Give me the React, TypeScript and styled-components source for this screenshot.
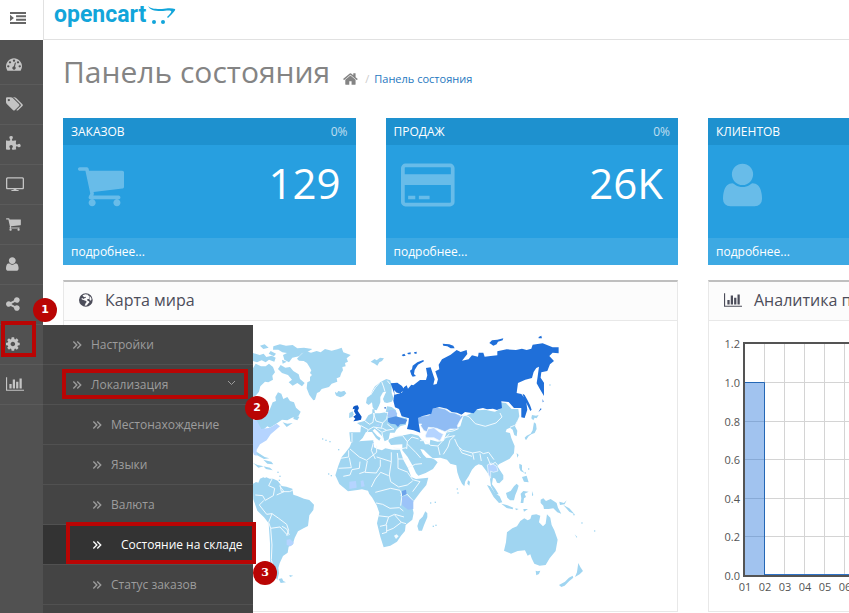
import React from 'react';
import styled, { createGlobalStyle, css } from 'styled-components';

const Global = createGlobalStyle`
  * { box-sizing: border-box; }
  body {
    margin: 0;
    background: #fff;
    color: #666;
    font-family: "Open Sans", sans-serif;
    font-size: 12px;
    line-height: 20px;
    overflow: hidden;
  }
  ul, h1, h2, p { margin: 0; padding: 0; }
  ul { list-style: none; }
  a { text-decoration: none; color: inherit; }
`;

/* ---------- icons ---------- */

const glyphs = {
  dashboard: { box: '0 0 1792 1792', ratio: 1792, d: 'M384 1152q0-53-37.500-90.500t-90.500-37.500-90.500 37.500-37.500 90.500 37.500 90.500 90.500 37.500 90.500-37.500 37.500-90.500zm192-448q0-53-37.500-90.500t-90.500-37.500-90.500 37.500-37.500 90.500 37.500 90.500 90.500 37.500 90.500-37.500 37.500-90.500zm428 481l101-382q6-26-7.500-48.500t-38.500-29.500-48 6.500-30 39.500l-101 382q-60 5-107 43.500t-63 98.500q-20 77 20 146t117 89 146-20 89-117q16-60-6-117t-72-91zm660-33q0-53-37.500-90.500t-90.500-37.500-90.500 37.500-37.500 90.500 37.500 90.500 90.500 37.500 90.500-37.500 37.500-90.500zm-640-640q0-53-37.500-90.500t-90.500-37.500-90.500 37.500-37.500 90.500 37.500 90.500 90.500 37.500 90.500-37.500 37.500-90.500zm448 192q0-53-37.500-90.500t-90.500-37.500-90.500 37.500-37.500 90.500 37.500 90.500 90.500 37.500 90.500-37.500 37.500-90.500zm320 448q0 261-141 483-19 29-54 29h-1402q-35 0-54-29-141-221-141-483 0-182 71-348t191-286 286-191 348-71 348 71 286 191 191 286 71 348z' },
  tags: { box: '128 0 1920 1792', ratio: 1920, d: 'M576 448q0-53-37.500-90.500t-90.500-37.500-90.500 37.500-37.500 90.500 37.500 90.500 90.500 37.500 90.500-37.500 37.500-90.500zm1067 576q0 53-37 90l-491 492q-39 37-91 37-53 0-90-37l-715-716q-38-37-64.500-101t-26.500-117v-416q0-52 38-90t90-38h416q53 0 117 26.500t102 64.500l715 714q37 39 37 91zm384 0q0 53-37 90l-491 492q-39 37-91 37-36 0-59-14t-53-45l470-470q37-37 37-90 0-52-37-91l-715-714q-38-38-102-64.500t-117-26.500h224q53 0 117 26.500t102 64.500l715 714q37 39 37 91z' },
  puzzle: { box: '91 0 1701 1792', ratio: 1701, d: 'M1755 1083q0 81-44.500 135t-123.500 54q-41 0-77.500-17.500t-59-38-56.500-38-71-17.500q-110 0-110 124 0 39 16 115t15 115v5q-22 0-33 1-34 3-97.500 11.500t-115.500 13.500-98 5q-61 0-103-26.500t-42-83.500q0-37 17.500-71t38-56.500 38-59 17.500-77.500q0-79-54-123.500t-135-44.500q-84 0-143 45.500t-59 127.500q0 43 15 83t33.500 64.500 33.500 53 15 50.500q0 45-46 89-37 35-117 35-95 0-245-24-9-2-27.500-4t-27.500-4l-13-2q-1 0-3-1-2 0-2-1v-1024q2 1 17.500 3.500t34 5 21.500 3.500q150 24 245 24 80 0 117-35 46-44 46-89 0-22-15-50.500t-33.500-53-33.500-64.500-15-83q0-82 59-127.500t144-45.500q80 0 134 44.500t54 123.500q0 41-17.500 77.500t-38 59-38 56.500-17.500 71q0 57 42 83.500t103 26.500q64 0 180-15t163-17v2q-1 2-3.500 17.500t-5 34-3.500 21.500q-24 150-24 245 0 80 35 117 44 46 89 46 22 0 50.500-15t53-33.500 64.500-33.500 83-15q82 0 127.500 59t45.500 143z' },
  desktop: { box: '0 0 2048 1792', ratio: 2048, d: 'M160 128h1728q66 0 113 47t47 113v1056q0 66-47 113t-113 47h-704v80h230q34 0 34 50t-34 50h-780q-34 0-34-50t34-50h230v-80h-704q-66 0-113-47t-47-113v-1056q0-66 47-113t113-47zm32 150q-44 0-44 44v986q0 44 44 44h1664q44 0 44-44v-986q0-44-44-44z' },
  cart: { box: '64 0 1664 1792', ratio: 1664, d: 'M704 1536q0 52-38 90t-90 38-90-38-38-90 38-90 90-38 90 38 38 90zm896 0q0 52-38 90t-90 38-90-38-38-90 38-90 90-38 90 38 38 90zm128-1088v512q0 24-16.500 42.500t-40.500 21.500l-1044 122q13 60 13 70 0 16-24 64h920q26 0 45 19t19 45-19 45-45 19h-1024q-26 0-45-19t-19-45q0-11 8-31.500t16-36 21.500-40 15.500-29.500l-177-823h-204q-26 0-45-19t-19-45 19-45 45-19h256q16 0 28.500 6.500t19.500 15.500 13 24.500 8 26 5.500 29.500 4.500 26h1201q26 0 45 19t19 45z' },
  user: { box: '0 0 1408 1792', ratio: 1408, d: 'M1408 1405q0 120-73 189.500t-194 69.500h-874q-121 0-194-69.500t-73-189.500q0-53 3.500-103.500t14-109 26.500-108.500 43-97.500 62-81 85.500-53.500 111.500-20q9 0 42 21.500t74.500 48 108 48 133.500 21.500 133.500-21.500 108-48 74.500-48 42-21.500q61 0 111.500 20t85.500 53.500 62 81 43 97.500 26.500 108.500 14 109 3.500 103.500zM1088 512q0 159-112.500 271.500t-271.500 112.500-271.500-112.500-112.500-271.500 112.500-271.500 271.500-112.500 271.500 112.500 112.500 271.500z' },
  share: { box: '128 0 1536 1792', ratio: 1536, d: 'M1344 1024q133 0 226.500 93.500t93.500 226.500-93.500 226.500-226.500 93.500-226.500-93.500-93.500-226.500q0-12 2-34l-360-180q-92 86-218 86-133 0-226.500-93.500t-93.500-226.500 93.500-226.500 226.500-93.500q126 0 218 86l360-180q-2-22-2-34 0-133 93.500-226.500t226.500-93.500 226.500 93.500 93.500 226.500-93.500 226.500-226.500 93.500q-126 0-218-86l-360 180q2 22 2 34t-2 34l360 180q92-86 218-86z' },
  cog: { box: '128 0 1536 1792', ratio: 1536, d: 'M1152 896q0-106-75-181t-181-75-181 75-75 181 75 181 181 75 181-75 75-181zm512-109v222q0 12-8 23t-20 13l-185 28q-19 54-39 91 35 50 107 138 10 12 10 25t-9 23q-27 37-99 108t-94 71q-12 0-26-9l-138-108q-44 23-91 38-16 136-29 186-7 28-36 28h-222q-14 0-24.500-8.500t-11.500-21.500l-28-184q-49-16-90-37l-141 107q-10 9-25 9-14 0-25-11-126-114-165-168-7-10-7-23 0-12 8-23 15-21 51-66.500t54-70.500q-27-50-41-99l-183-27q-13-2-21-12.500t-8-23.500v-222q0-12 8-23t19-13l186-28q14-46 39-92-40-57-107-138-10-12-10-24 0-10 9-23 26-36 98.500-107.500t94.500-71.500q13 0 26 10l138 107q44-23 91-38 16-136 29-186 7-28 36-28h222q14 0 24.500 8.500t11.500 21.500l28 184q49 16 90 37l142-107q9-9 24-9 13 0 25 10 129 119 165 170 7 8 7 22 0 12-8 23-15 21-51 66.500t-54 70.500q26 50 41 98l183 28q13 2 21 12.500t8 23.500z' },
  chart: { box: '0 0 2048 1792', ratio: 2048, d: 'M640 896v512h-256v-512h256zm384-512v1024h-256v-1024h256zm1024 1152v128h-2048v-1536h128v1408h1920zm-640-896v768h-256v-768h256zm384-384v1152h-256v-1152h256z' },
  home: { box: '64 0 1664 1792', ratio: 1664, d: 'M1472 992v480q0 26-19 45t-45 19h-384v-384h-256v384h-384q-26 0-45-19t-19-45v-480q0-1 .5-3t.5-3l575-474 575 474q1 2 1 6zm223-69l-62 74q-8 9-21 11h-3q-13 0-21-7l-692-577-692 577q-12 8-24 7-13-2-21-11l-62-74q-8-10-7-23.500t11-21.500l719-599q32-26 76-26t76 26l244 204v-195q0-14 9-23t23-9h192q14 0 23 9t9 23v408l219 182q10 8 11 21.500t-7 23.500z' },
  card: { box: '0 0 1920 1792', ratio: 1920, d: 'M160 128h1600q66 0 113 47t47 113v1216q0 66-47 113t-113 47h-1600q-66 0-113-47t-47-113v-1216q0-66 47-113t113-47zm0 128q-26 0-26 26v230h1652v-230q0-26-26-26zm-26 640v608q0 26 26 26h1600q26 0 26-26v-608zM256 1280h256v128h-256zM640 1280h384v128h-384z' },
  indent: { box: '0 0 1792 1792', ratio: 1792, d: 'M0 224h1792v224H0zM680 600h1112v224H680zM680 970h1112v224H680zM0 1344h1792v224H0zM0 540l440 356-440 356z' },
  angles: { box: '0 0 1024 1024', ratio: 1024, d: 'M90 200l95-90 410 402-410 402-95-90 310-312zM490 200l95-90 410 402-410 402-95-90 310-312z' },
  globe: { box: '0 0 1536 1792', ratio: 1536, d: 'M768 128a768 768 0 1 1 0 1536a768 768 0 1 1 0-1536zM700 250l-130 60-110 30-60 110 110 60 60 80 130-60 70 70-30 80-130 20-90 80-110-90-130 20 40 120 170 60 150 60 160 60 60 120-110 110-60 160-70 90 130 40 140-60 110-150 160-140-20-120-150-90-110-70 60-80 120-50 150-30-110-140 90-60-60-110-120-30 10-100zM1240 500l-70 110 60 130-60 100 80 110 100 10 50-160-30-170z' },
} as const;

type GlyphName = keyof typeof glyphs;

const Svg = styled.svg`
  display: block;
  flex: none;
  fill: currentColor;
`;

function Icon({ name, size }: { name: GlyphName; size: number }) {
  const g = glyphs[name];
  return (
    <Svg
      viewBox={g.box}
      width={name === 'angles' ? size : Math.round((g.ratio / 1792) * size)}
      height={size}
      preserveAspectRatio="xMinYMid meet"
      aria-hidden="true"
    >
      <path fillRule="evenodd" d={g.d} />
    </Svg>
  );
}

/* ---------- frame ---------- */

const Shell = styled.div`
  display: grid;
  grid-template-columns: 43px minmax(0, 1fr);
  grid-template-rows: 40px auto;
  min-height: 100vh;
`;

const Toggle = styled.button`
  display: flex;
  align-items: center;
  padding: 0 0 4px 10px;
  border: 0;
  background: #fff;
  color: #666;
`;

const TopBar = styled.header`
  display: flex;
  align-items: flex-start;
  padding: 0 10px;
  background: #fff;
  border-left: 1px solid #e1e1e1;
  border-bottom: 1px solid #e1e1e1;
`;

const Logo = styled.a`
  display: flex;
  align-items: flex-start;
  gap: 1px;
  color: #12a5da;
  font: 700 23px/30px Roboto, sans-serif;
`;

const LogoCart = styled.svg`
  margin-top: 5px;
`;

const SideNav = styled.nav`
  position: relative;
  z-index: 2;
  background: #515151;
  padding-top: 5px;
  min-width: 0;
`;

const SideItem = styled.li`
  position: relative;
  border-bottom: 1px solid #5b5b5b;
`;

const SideLink = styled.a`
  display: flex;
  align-items: center;
  height: 39px;
  padding: 0 0 2px 6px;
  color: #c4c4c4;
`;

const SubMenu = styled.ul`
  position: absolute;
  top: 0;
  left: 43px;
  width: 210px;
  padding-bottom: 8px;
  background: #444;
`;

const SubItem = styled.li<{ $active?: boolean }>`
  position: relative;
  border-bottom: 1px solid #515151;
  background: ${(p) => (p.$active ? '#333' : 'transparent')};
`;

const SubLink = styled.a<{ $depth: number; $active?: boolean }>`
  display: flex;
  align-items: center;
  gap: ${(p) => (p.$active ? 19 : 9)}px;
  height: 39px;
  padding: 0 17px 0 ${(p) => 9 + 20 * p.$depth}px;
  color: ${(p) => (p.$active ? '#fff' : '#9d9d9d')};
  white-space: nowrap;
`;

const Chevron = styled.svg`
  margin: 0 0 3px auto;
  fill: none;
  stroke: #9d9d9d;
`;

/* ---------- numbered callouts ---------- */

const spots = {
  one: css`top: -4px; left: 1px; width: 35px; height: 36px;`,
  two: css`top: 4px; left: 19px; width: 186px; height: 30px;`,
  three: css`top: -3px; left: 23px; width: 190px; height: 42px;`,
};

const Outline = styled.span<{ $at: keyof typeof spots }>`
  position: absolute;
  z-index: 2;
  border: 4px solid #b90504;
  pointer-events: none;
  ${(p) => spots[p.$at]}
`;

const badgeSpots = {
  one: css`top: -27px; left: 33px;`,
  two: css`top: 31px; left: 202px;`,
  three: css`top: 36px; left: 210px;`,
};

const Badge = styled.span<{ $at: keyof typeof spots }>`
  position: absolute;
  z-index: 3;
  width: 24px;
  height: 24px;
  border-radius: 50%;
  background: #b90504;
  color: #fff;
  text-align: center;
  font: 700 11px/24px ${(p) => (p.$at === 'three' ? '"DejaVu Serif", serif' : '"DejaVu Sans", sans-serif')};
  ${(p) => badgeSpots[p.$at]}
`;

/* ---------- content ---------- */

const Content = styled.main`
  min-width: 0;
  overflow: hidden;
  padding: 12px 20px 0;
`;

const Heading = styled.div`
  display: flex;
  align-items: flex-start;
  height: 66px;
`;

const Title = styled.h1`
  font-size: 30px;
  line-height: 40px;
  font-weight: 400;
  color: #848484;
  white-space: nowrap;
`;

const Crumbs = styled.ol`
  display: flex;
  align-items: center;
  gap: 7px;
  margin: 0;
  padding: 17px 0 0 13px;
  list-style: none;
  font-size: 11px;
  color: #848484;
`;

const Crumb = styled.li`
  display: flex;
  gap: 5px;
  align-items: center;
`;

const Slash = styled.span`
  color: #ccc;
`;

const CrumbLink = styled.a`
  color: #1e78c0;
`;

const HomeLink = styled.a`
  display: block;
`;

const Grid = styled.div`
  display: grid;
  grid-template-columns: repeat(4, minmax(0, 1fr));
  gap: 15px 30px;
  min-width: 1260px;
`;

const Tile = styled.section`
  background: #279fe0;
  color: #fff;
`;

const TileHead = styled.h2`
  display: flex;
  justify-content: space-between;
  padding: 4px 8px 3px;
  background: #1e91cf;
  font-size: 12px;
  line-height: 20px;
  font-weight: 400;
`;

const Percent = styled.span`
  opacity: 0.7;
`;

const TileBody = styled.div`
  display: flex;
  justify-content: space-between;
  height: 93px;
  padding: 15px;
  font-size: 42px;
  line-height: 46px;
`;

const TileIcon = styled.span`
  opacity: 0.3;
`;

const TileFoot = styled.a`
  display: block;
  padding: 4px 8px 3px;
  background: #3da9e3;
`;

const Panel = styled.section`
  grid-column: span 2;
  border: 1px solid #e8e8e8;
  border-top: 2px solid #bfbfbf;
`;

const PanelHead = styled.h2`
  display: flex;
  align-items: center;
  gap: 12px;
  height: 39px;
  padding: 0 15px 2px;
  border-bottom: 1px solid #e8e8e8;
  background: #fcfcfc;
  font-size: 16px;
  font-weight: 400;
  color: #4c4d5a;
`;

const Drawing = styled.svg`
  display: block;
  width: 100%;
  height: 290px;
`;

/* ---------- world map ---------- */

const land = '#a0d5f1';
const pale = '#b5d4ff';
const seam = '#f2fafe';

const north = [
  'M145 85l20-20 18 6 17-5 12 4 13-10 20 5 17-4 13-5 5 14 22 8-12 10 4 10-9 4 2 10-10 2 2 10-5 8-4 12-10 4 2 10-17 6-8 10-22 6-6 8-8 4-6 20-5 2-12-16-8-20 2-18 8-4 0-12 6-6-6-6 4-8-7-12-6-10-10-6-14-1-6-6z',
  'M255 188l6 4 4-6 8 2 10-3 6 8-8 8-10 4-12-5-3-5z',
  'M362 98l12-8 6 4 10-8 12 2-6 8-8 4-6 10-8-6z',
  'M9 72l20 6 12-4 8 10 16-4 12 6-4 12-16-6-10 8-12-6-14 6-12-4zM70 52l20-6 18 4 20-2 14 10 20-2 25 4-16 10-14 2-10 10-20 4-10 14-14-8-4-14 12-6-14-2-12-8-16 0zM30 50l14-4 12 10-16 4zM62 66l16 8-6 8-16-8zM96 92l14 6-12 6z',
  'M9 118l8-14 16 8 14 0 10-8 12 10 6 16-8 10 2 12-14 8-10-2-14 14-4 16-10 12-8 2zM92 108l14 8 14-2 10 12 16 10 4 14 14 12-8 10-14-10-14 8-12-10 10-8-12-14-18-6-12-12z',
  'M60 240l8-20 10-4-2-12 8-14 10 4 6 16 12-6 8 12 12 4 6 16 14 12-6 12-20 6-14 8-16-2-14 10-22 14-8-4-12 10-20 4-12-24 18-14 22-8zM134 256l14 8-6 10-12-4zM98 280l14 4 16-2-18 12z',
  'M348 222l3-16 11-8 6-14 7-12 18-14 16-8 12 4 4 12 0 26 6 16-6 10-14 4-8-2-4-10 6-14 4-8-10 2-8 14 0 16-4 10-7 14-7-2-5-8-2-14-10 8z',
  'M298 310h33l2-20-12-8 14-4 10-3 10-16 12-6 0-12 6 0 2 12 14 0 18-3 4-18 14 2 13 10 4 20 28 3-2 20-16 4-12 10-6 10-14 0-4 20-12 6-6-14-16-16-8-8-6 6 14 16 10 6-4 8-10-8-12-18-18 0-10 18-13 13-24-2z',
  'M298 252l10-5 3 9-4 8-10 3z',
  'M12 366l10 4 22 14 14 4-16 2-22-12zM40 392l24 6 6 8-18-2z',
];

const asia =
  'M190 262l20-7 15-15 12 4 18-2 18 4 12 2 15-8-2-20 20 2 17 18 20 0 3 22-8 18-5 12 7 13-2 17-7-4-5-16-8-6-10 5-3 8 13 3 4 15 10 24-2 22-13 16-19 10-12 6-6 6 9 14 9 14 0 12-12 12-7-2-5-12-7-3-3 20 10 13 10 17-10 0-13-25-4-30-10-15-13-17-10-3-10 5-10 11-10 20-10 15-3 15-7-8-8-16-6-18-3-21-18-5-10-12-20-6-22 2-8-6-8-8-12-12-10-2 8 16 10 10 16 2 10 4 8 8-14 20-22 12-22 8-7-8-10-22-15-26-16-20 0-18-34 2-8-12 4-6 24-8 22-4 18-4 24 6 10 8 8 18 14 0 2-14 22 6 18-2 10-30 18-4 22-10z';

const russia =
  'M-28 163l20-2 14 10 6 10-10 12-12-2-8-8 2 14 22-6 6-16 8-6 4 10 10-12 6 2 20-16 18 0 4-14-4-22 14-2 4 12 8 24-4 16 10-2 4-14-8-24 12-6-2-14 10-16 26-14 18-14 12 6 18-6 2 12-16 20 20-4 10-12 18 4 2-12 14 0 4 12 18-2 20-2 0-12 28-6 28 2 18-4 14 4 14-4 4-12 30-4 30 12 18 0 0 18-18-2-10 10 14 15-12 10-8 20-18 4-2 16 10 15 0 40-12-20-10-18 3-20 4-30-8 4-8 12-5 18-20 5-22 10-4 30 14 3 14 17 4 30-8 25-10-2 0-28-22 0-16-18-22-2 2 20-15 6-12-4-18 2-12-4-18 4-10 12-26-4-10 8-14-6-16-2-14-10-23-5-20 5-4 15-26 7-14 6 2 16 5 28-20-7-20-4 4-16 2-16-22-6-8-22-12-5-5-20 3-20z';

const isles = [
  'M5 78l8-4 4 6-8 2zM22 72l10-2 0 6-8 0zM42 70l8-2 0 6-6 0zM38 110l14-10 18-7 2 4-18 10-10 16-2 12 6 6-10 2-4-6-4-12 6-4zM128 44l20 2 12 4 4 8-12 0-10-6-12-2zM268 42l8-8 16-2 18-4-2 6-14 4-4 8-10 4-6-4zM416 24l8-4 2 8-10 0z',
  'M368 194l6 4 8 14 8 16 5 14-4 4-10-20-8-14zM428 210l3 8-3 2zM422 238l3 2-10 10z',
];

const japan = 'M396 258l12 2 8-2-6 10-6-2-4 8-6-6zM402 280l6 4 2 16-6 12-10 4-8 6-8 12-4-8 6-6 12-6 6-10zM350 372l6 6-4 8z';

const south = [
  'M8 75l10-6 7 2 5-12 10-4 5 2 4-2 10 4 10 0 14 6 12 16 14 2 18 6 3 18 12 4 20 8 16 4 14 14-2 16-12 16-4 32-12 6-18 10-10 20-6 20-12 6-3 18-14 10-10 22-4 14 2 16-5 20-14-20-8-36 0-54-4-60-14-18-20-20-12-34z',
  'M86 360l10-2 4 8 8 4-16 2zM118 348l12 2-10 4zM9 12l14 6 18 4-16 4zM40 22l20 4 8 8-20-4z',
  'M265 20l10-26 12-14 12-16 6-14 30-4 35-2 0 20 12 6 14 4 10-6 22 4 22 0 10 30 14 26 10 26 14 6 37-4-6 22-18 22-18 24-8 12 6 26-4 20-20 16-2 18-12 14-12 18-20 12-20 5-10-32-10-40 7-32-8-22-14-24-8-10-4-10-18-4-14 2-28 4-26-22-12-26z',
  'M526 157l6 6 0 12-10 24-6 16-10 0-4-14 6-18 10-10z',
  'M762 275l6-25 3-30 16-12 14-6 10-16 12-8 10 6 8-4 4-12 14-2 12 4-4 20 12 12 8-8 4-28 10 10 4 22 8 16 10 28-6 34-18 22-12 20-18 2-16-6-8-16-4-12-8 4-8-16-22 2-20 8z',
  'M857 335l6 2 8-2-4 10-8 4zM985 312l6 12 8 12-10 10-14 8 6-14zM968 350l2 6-12 10-14 14-10 4-7-6 18-10 12-12z',
  'M872 122l8-4 8 8 14-6 18 12 4 14 10 18-12-4-12-12-14 2-14 0-2-10-8-8zM928 128l14 4 8-8-6 12-14 2z',
  'M768 102l14-6 10-14 8-8 6 6-4 14-6 14-4 16-12 0-8-8zM711 78l10 4 14 20 14 10 8 18-10 2-16-18-10-18zM754 134l16 4 20 8-2 5-18-4zM796 148l10 2-8 4zM820 150l14 0-12 8zM812 104l8-8 16 2-12 6 4 10-6 4-2 14-8 0 2-14zM808 14l8 4 0 14 8 10-12-6-4-10zM816 54l14-4 6 20-14-2zM654 64l6 4-2 12-6-6zM846 96l4 12-4 4zM974 226l8 8-2 2zM940 138l18 10 16 18-16-8z',
];

const islets = [
  [234, 43], [242, 48], [540, 130], [554, 128], [548, 200], [556, 197], [620, 88],
  [622, 100], [82, 38], [88, 50], [86, 62], [824, 40], [834, 28], [970, 165],
  [994, 190], [1032, 214], [216, -62], [226, -58], [238, -54], [264, -30], [898, -224],
];

const bordersNorth =
  'M362 198l14-22 12-14M395 158l6 16 4 14M412 155l8 10M333 290l22 12-4 10M345 276l14 10 10-6 4-28M370 252l8 24 20 6 12-12 4-20M356 302l14-8 28 4 12 6 22-4M398 282l-4 14M376 296l20 14 14-6M396 312l4 20M405 250l20 2M412 285l20 16M306 312l0 26';
const bordersAsia =
  'M180 262l10-6 18 8 18 20 30 8 32-10 18-18-6-12M-22 322l30-2 14 18-2 22M22 338l14-14 20 6M22 345l26 26 14 16M60 335l14 0 18 14 22 2 20-22 14-14M114 352l6 26M135 310l24-4 14-6M134 326l30-6-14 14-6 20-14 22M164 330l10 22 14 12 30 8 22-4 10 6 16-4 16 22M218 372l4 20M240 374l4 22M262 384l10 24 14-8 8 10M178 358l8 14 30 10M-20 356l20 4 20-4M20 418l26-12 20-2M345 290l8-14M330 295l14-6';
const bordersSouth =
  'M300-30l28 24 22 10 30-24 0-20M370-48l-6 22 12 26M272-2l24-4 0-20M298-4l6 30-38 2M330 8l-2 20-22 4-6 16-20 4M352 6l-6 32-18 6M380-6l44 14 0-28M424 8l-6 40 4 20M442-18l2 18 28 0M444 0l0 28 30 12M345 40l34 2 12-20 0-20M376 60l16-20 24 10M376 60l-12 24M422 68l24 16 26-6 16-12M376 100l46-12 28 6 6 16-4 30M378 132l20 4 22 12 28-2 12 10M382 170l34 4 18-8 28 8M416 174l-8 24-18 4M410 198l0 22-14 4M434 168l20 22-24 18-20 8M454 190l14 4M452 110l20-4 20 22M474 42l14 20 22 6-22 30M66 60l-10 20 18 8-4 22-24 14-8-14-22-2M90 78l4 20 24 0 10-4M80 108l22-10-12-16M42 124l-14 14 22 28 16-2 20 14 24 18 6 18-6 16M66 164l-10 26 6 18 28-4 24 26M62 208l4 50-2 44 10 40M96 202l14 8 8 18';

function WorldMap() {
  return (
    <Drawing viewBox="64 322 613 290" preserveAspectRatio="xMinYMin slice" role="img" aria-label="Карта мира">
      <g transform="translate(250 330) scale(.3333)" strokeLinejoin="round">
        <g fill={land}>{north.map((d) => <path key={d} d={d} />)}</g>
        <path fill={pale} d="M0 272l20 2 14 26 26-4 20-12 10 8-14 12-14 12-12 18-20 12-10 16 0 18-8-2-4-12-8 4z" />
        <path fill="#0d57c4" d="M315 230l8-1 4 8-4 8 12 18-2 9-12 3-11 2 6-8-6-6 8-6-6-10 2-8-6 2 2-8zM402 236l6-2-2 6z" />
        <path fill="none" stroke={seam} strokeWidth="3" d={bordersNorth} />
        <path fill="#9fc4f8" d="M412 262l4-18 16-2 10 12-6 10-14 2z" />
        <path fill={pale} d="M364 340l8 0 0 18-6 0zM376 288l14-2-4 6z" />
        <path fill="#5291e4" d="M414 268l24-6 14 4 20 6-6 12-16 2-6 8-8-8-14-2-8-6z" />
        <g transform="translate(450 0)">
          <path fill={land} d={asia} />
          <path fill={land} d={japan} />
          <path fill="#fff" d="M50 288l8-4 8 6-4 12 10 8 8 20-14 4-10-14-2-18z" />
          <path fill="#90bcf4" stroke={seam} strokeWidth="2" d="M48 268l14-6 26-4 4-18 20-5 23 5 15 10 15 2 13 6 12 2-10 15-8 15 3 10-25 0-15 8-25-10-25-3-3 13-10-3-10-15 3-5-15 0z" />
          <path fill={pale} stroke={seam} strokeWidth="2" d="M76 320l8-20 18-4 14 12 14 8-10 20-18-10-24 0zM262 408l12-6 16 10 4 14-14 4-8-4 0 22-6-10z" />
          <path fill="#1f6fd9" d={russia} />
          {isles.map((d) => <path key={d} fill="#1f6fd9" d={d} />)}
          <path fill="none" stroke={seam} strokeWidth="3" d={bordersAsia} />
        </g>
        <g transform="translate(0 390)">
          <g fill={land}>{south.map((d) => <path key={d} d={d} />)}</g>
          <path fill="none" stroke={seam} strokeWidth="3" d={bordersSouth} />
          <path fill={pale} d="M298 68l20-2 2 20-22 4zM332 66l8-2 4 18-10 2zM110 242l10-2 12 12-10 10-12-4z" />
          <path fill="#9cc3f8" d="M456 114l14-4 20 16 0 24-16 2-18-14z" />
          <path fill="#6da3ea" d="M456 96l12-4 2 14-14 6z" />
          <path fill={seam} d="M432 230l8-4 6 6-8 8z" />
          <g fill={land}>
            {islets.map(([x, y]) => <rect key={`${x}-${y}`} x={x} y={y} width="4" height="4" />)}
          </g>
        </g>
      </g>
    </Drawing>
  );
}

/* ---------- analytics chart ---------- */

const yLabels = ['1.2', '1.0', '0.8', '0.6', '0.4', '0.2', '0.0'];
const yLines = [22, 61, 100, 138, 177, 215, 254];
const days = Array.from({ length: 30 }, (_, i) => String(i + 1).padStart(2, '0'));

const AxisText = styled.text`
  fill: #545454;
  font-size: 11px;
`;

function Analytics() {
  return (
    <Drawing role="img" aria-label="Аналитика продаж">
      {yLines.slice(1, -1).map((y) => <rect key={y} x="36" y={y} width="600" height="1" fill="#d4d4d4" />)}
      {days.slice(1).map((d, i) => <rect key={d} x={55 + i * 20} y="22" width="1" height="232" fill="#d4d4d4" />)}
      <rect x="35" y="61" width="21" height="193" fill="#1f6fd9" fillOpacity=".42" />
      <path d="M35.500 254V61.500H55.500V254" fill="none" stroke="#2467b5" />
      <path d="M640 22H35V255H640" fill="none" stroke="#545454" strokeWidth="2" />
      <path d="M56 253.500H640" stroke="#2f73c8" />
      {yLabels.map((t, i) => <AxisText key={t} x="31" y={yLines[i] + 5} textAnchor="end">{t}</AxisText>)}
      {days.map((d, i) => <AxisText key={d} x={36 + i * 20} y="270" textAnchor="middle">{d}</AxisText>)}
    </Drawing>
  );
}

/* ---------- page ---------- */

const sideItems: { icon: GlyphName; label: string }[] = [
  { icon: 'dashboard', label: 'Панель состояния' },
  { icon: 'tags', label: 'Каталог' },
  { icon: 'puzzle', label: 'Дополнения' },
  { icon: 'desktop', label: 'Дизайн' },
  { icon: 'cart', label: 'Продажи' },
  { icon: 'user', label: 'Клиенты' },
  { icon: 'share', label: 'Маркетинг' },
  { icon: 'cog', label: 'Система' },
  { icon: 'chart', label: 'Отчёты' },
];

const subItems = [
  { label: 'Настройки', depth: 1 },
  { label: 'Локализация', depth: 1, open: true },
  { label: 'Местонахождение', depth: 2 },
  { label: 'Языки', depth: 2 },
  { label: 'Валюта', depth: 2 },
  { label: 'Состояние на складе', depth: 2, active: true },
  { label: 'Статус заказов', depth: 2 },
];

const tiles: { title: string; percent?: string; value?: string; icon: GlyphName }[] = [
  { title: 'ЗАКАЗОВ', percent: '0%', value: '129', icon: 'cart' },
  { title: 'ПРОДАЖ', percent: '0%', value: '26K', icon: 'card' },
  { title: 'КЛИЕНТОВ', icon: 'user' },
];

function SystemMenu() {
  return (
    <SubMenu>
      {subItems.map((s) => (
        <SubItem key={s.label} $active={s.active}>
          <SubLink href="#" $depth={s.depth} $active={s.active}>
            <Icon name="angles" size={10} />
            {s.label}
            {s.open && (
              <Chevron width="9" height="6" viewBox="0 0 9 6" aria-hidden="true">
                <path d="M1 1l3.500 3.500L8 1" />
              </Chevron>
            )}
          </SubLink>
          {s.open && <><Outline $at="two" /><Badge $at="two">2</Badge></>}
          {s.active && <><Outline $at="three" /><Badge $at="three">3</Badge></>}
        </SubItem>
      ))}
    </SubMenu>
  );
}

export default function App() {
  return (
    <>
      <Global />
      <Shell>
        <Toggle aria-label="Меню"><Icon name="indent" size={16} /></Toggle>
        <TopBar>
          <Logo href="#">
            opencart
            <LogoCart width="30" height="20" viewBox="0 0 30 20" fill="currentColor" aria-hidden="true">
              <path d="M1 1c3 3 8 3 14 3 6-1 10-1 13 0 1 1-2 4-7 9l-1-1c3-3 5-5 4-6-2-1-6 0-10 0C7 6 3 5 1 1z" />
              <circle cx="7" cy="17" r="2" />
              <circle cx="16" cy="17" r="2" />
            </LogoCart>
          </Logo>
        </TopBar>
        <SideNav aria-label="Навигация">
          <ul>
            {sideItems.map((s) => (
              <SideItem key={s.icon}>
                <SideLink href="#" aria-label={s.label}><Icon name={s.icon} size={16} /></SideLink>
                {s.icon === 'cog' && (
                  <>
                    <SystemMenu />
                    <Outline $at="one" />
                    <Badge $at="one">1</Badge>
                  </>
                )}
              </SideItem>
            ))}
          </ul>
        </SideNav>
        <Content>
          <Heading>
            <Title>Панель состояния</Title>
            <Crumbs>
              <Crumb><HomeLink href="#" aria-label="Главная"><Icon name="home" size={16} /></HomeLink></Crumb>
              <Crumb><Slash>/</Slash><CrumbLink href="#">Панель состояния</CrumbLink></Crumb>
            </Crumbs>
          </Heading>
          <Grid>
            {tiles.map((t) => (
              <Tile key={t.title}>
                <TileHead>{t.title}{t.percent && <Percent>{t.percent}</Percent>}</TileHead>
                <TileBody>
                  <TileIcon><Icon name={t.icon} size={50} /></TileIcon>
                  {t.value}
                </TileBody>
                <TileFoot href="#">подробнее...</TileFoot>
              </Tile>
            ))}
            <Tile />
            <Panel>
              <PanelHead><Icon name="globe" size={16} />Карта мира</PanelHead>
              <WorldMap />
            </Panel>
            <Panel>
              <PanelHead><Icon name="chart" size={16} />Аналитика продаж</PanelHead>
              <Analytics />
            </Panel>
          </Grid>
        </Content>
      </Shell>
    </>
  );
}
